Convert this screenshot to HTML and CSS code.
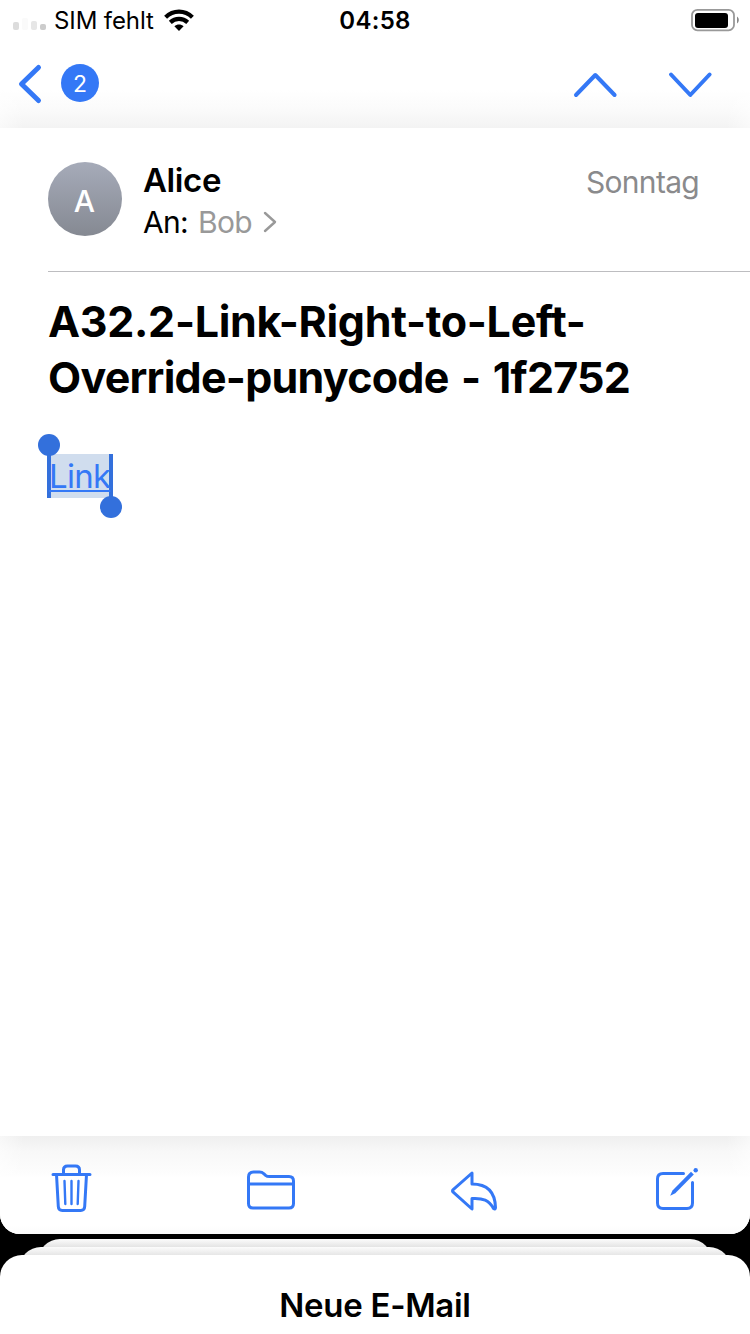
FILE: index.html
```html
<!DOCTYPE html>
<html lang="de">
<head>
<meta charset="utf-8">
<title>Mail</title>
<link rel="stylesheet" href="styles.css">
</head>
<body>
<main class="screen">
  <section class="mail">
    <header class="top">
      <div class="status">
        <div class="carrier">
          <span class="signal"><i class="bar b1"></i><i class="bar b2"></i><i class="bar b3"></i><i class="bar b4"></i></span>
          <span class="carrier-name">SIM fehlt</span>
          <svg class="wifi" width="30" height="22" viewBox="0 0 30 22" fill="none" stroke="#000" stroke-width="4.2">
            <path d="M1.600 8.200C9.200.8 20.800.8 28.400 8.200"/>
            <path d="M6.300 13.400c4.900-4.600 12.500-4.600 17.400 0"/>
            <path d="M15 21.900l-4.600-4.600c2.600-2.300 6.600-2.300 9.200 0z" fill="#000" stroke="none"/>
          </svg>
        </div>
        <time class="clock">04:58</time>
        <svg class="battery" width="49" height="24" viewBox="0 0 49 24">
          <rect x="2" y="1.900" width="42" height="20.400" rx="5.400" fill="none" stroke="#999" stroke-width="1.800"/>
          <rect x="5" y="5" width="33" height="15" rx="3" fill="#000"/>
          <path d="M47 8.500c2.400 1.500 2.400 5.500 0 7z" fill="#888"/>
        </svg>
      </div>
      <nav class="nav">
        <svg class="back" width="26" height="42" viewBox="0 0 26 42"><path d="M21.500 4.500L4.500 21l17 16.500"/></svg>
        <span class="count">2</span>
        <svg class="prev" width="46" height="28" viewBox="0 0 46 28"><path d="M4 25L23.300 5 42.600 25"/></svg>
        <svg class="next" width="46" height="28" viewBox="0 0 46 28"><path d="M4 4.500L23.300 25 42.600 4.500"/></svg>
      </nav>
    </header>
    <article class="message">
      <header class="sender">
        <div class="avatar">A</div>
        <div class="people">
          <div class="from">Alice</div>
          <div class="to"><span class="to-label">An:</span><span class="to-name">Bob</span>
            <svg class="more" width="14" height="22" viewBox="0 0 14 22"><path d="M2 2l10 9-10 9"/></svg>
          </div>
        </div>
        <time class="date">Sonntag</time>
      </header>
      <h1 class="subject"><span class="line-one">A32.2-Link-Right-to-Left-</span><br><span class="line-two">Override-punycode - 1f2752</span></h1>
      <div class="selection"><a class="link">Link</a><i class="knob start"></i><i class="knob end"></i></div>
    </article>
    <footer class="toolbar">
      <svg class="tool trash" width="42" height="50" viewBox="0 0 42 50">
        <path d="M2 10.500h37M12.500 10.500V6q0-4 4-4h8q4 0 4 4v4.500M5.500 10.500l1.800 32q.2 4 4 4h18.400q3.800 0 4-4L35.500 10.500"/>
        <path class="thin" d="M13.500 17l.8 23M20.500 17v23M27.500 17l-.8 23"/>
      </svg>
      <svg class="tool folder" width="50" height="42" viewBox="0 0 50 42">
        <path d="M2.500 33.500V7q0-5 5-5h6q2.500 0 4.500 1.800l1.600 1.500Q21 6.500 23.500 6.500H43q4.500 0 4.500 4.500v22.500q0 4.500-4.500 4.500H7q-4.500 0-4.500-4.500zM2.500 14h45"/>
      </svg>
      <svg class="tool reply" width="48" height="42" viewBox="0 0 48 42">
        <path d="M22 2L3.200 18.700q-1.400 1.200 0 2.500L22 38V27.500c11-.6 17 1.500 21.500 10q2 1.200 2-1C45 20 36 13 22 13z"/>
      </svg>
      <svg class="tool compose" width="44" height="44" viewBox="0 0 44 44">
        <path d="M28.500 6.500H8Q2.500 6.500 2.500 12v24Q2.500 41.500 8 41.500h24q5.500 0 5.500-5.500V15.500"/>
        <path d="M15.200 28.700l2.300-5.300L36 4.800l2.800 2.800-18.500 18.600z" fill="#3478f6" stroke="none"/>
        <circle cx="40.700" cy="3.200" r="2.200" fill="#3478f6" stroke="none"/>
      </svg>
    </footer>
  </section>
  <section class="stack">
    <div class="sheet far"></div>
    <div class="sheet mid"></div>
    <div class="sheet near">Neue E-Mail</div>
  </section>
</main>
</body>
</html>
```
FILE: styles.css
```css
body { margin: 0; background: #000; font-family: Inter, "Liberation Sans", sans-serif; color: #000; }
.screen { width: 750px; height: 1334px; overflow: hidden; display: flex; flex-direction: column; background: #000; }
.mail { height: 1234px; display: flex; flex-direction: column; background: #fff; border-radius: 0 0 20px 20px; overflow: hidden; }
.top { height: 128px; background: linear-gradient(90deg, #fff8, #fff0 24px, #fff0 726px, #fff8), linear-gradient(#fff 90px, #fbfbfb 108px, #f3f3f3 128px); }
.status { height: 40px; display: grid; grid-template-columns: 1fr auto 1fr; align-items: center; }
.carrier { display: flex; align-items: center; padding-left: 13px; }
.signal { display: flex; align-items: flex-end; gap: 3px; width: 41px; height: 12px; padding-top: 8px; }
.bar { width: 6px; border-radius: 2px; background: #dcdcdc; }
.b1 { height: 8px; }
.b2 { height: 12px; background: #fafafa; }
.b3 { height: 9px; background: #e6e6e6; }
.b4 { height: 6px; background: #ccc; }
.carrier-name { width: 100px; padding-top: 2px; font-size: 24px; white-space: nowrap; line-height: 38px; letter-spacing: -.1px; }
.wifi { margin-left: 10px; }
.clock { padding-top: 1px; font-size: 24px; font-weight: 600; letter-spacing: .3px; }
.battery { justify-self: end; margin-right: 11px; }
.nav { height: 88px; display: flex; align-items: center; padding-left: 17px; }
.nav svg { fill: none; stroke: #3478f6; stroke-width: 4; stroke-linecap: round; stroke-linejoin: round; }
.nav .back { stroke-width: 5; }
.count { width: 38px; height: 38px; margin: -2px 0 0 18px; border-radius: 50%; background: #3478f6; color: #fff; font-size: 23px; line-height: 40px; text-align: center; }
.prev { margin-left: auto; }
.next { margin: 0 37px 0 49px; }
.message { height: 1008px; padding-left: 48px; box-sizing: border-box; }
.sender { height: 144px; box-sizing: border-box; border-bottom: 1px solid #bdbdc0; display: flex; align-items: flex-start; padding-top: 34px; }
.avatar { width: 74px; height: 74px; border-radius: 50%; background: linear-gradient(#a6abb9, #858992); color: #fff; font-size: 30px; font-weight: 500; line-height: 78px; text-align: center; text-indent: -1px; }
.people { margin-left: 21px; }
.from { font-size: 33px; font-weight: 600; line-height: 36px; letter-spacing: -.4px; }
.to { display: flex; align-items: center; font-size: 30px; line-height: 48px; letter-spacing: -.7px; }
.to-name { margin: 0 11px 0 10px; color: #999; }
.more { fill: none; stroke: #999; stroke-width: 2.400; stroke-linecap: round; stroke-linejoin: round; }
.date { margin: 0 51px 0 auto; color: #8a8a8c; font-size: 30px; line-height: 40px; letter-spacing: -.7px; }
.subject { margin: 21px 0 0; font-size: 43px; line-height: 56px; font-weight: 700; white-space: nowrap; }
.line-one { letter-spacing: -.3px; }
.line-two { letter-spacing: -.750px; word-spacing: 3px; }
.selection { position: relative; width: 58px; height: 44px; margin: 49px 0 0 -1px; border: solid #3370dc; border-width: 0 4px; background: #d0ddee; }
.link { display: block; margin-left: -2px; color: #3478f6; font-size: 33px; line-height: 45px; letter-spacing: -.7px; text-decoration: underline; text-decoration-thickness: 2px; text-underline-offset: 2px; text-decoration-skip-ink: none; white-space: nowrap; }
.knob { position: absolute; width: 22px; height: 22px; border-radius: 50%; background: #3370dc; }
.start { left: -13px; top: -20px; }
.end { right: -13px; bottom: -20px; }
.toolbar { height: 98px; box-sizing: border-box; display: flex; align-items: flex-start; padding: 28px 0 0 51px; background: linear-gradient(90deg, #fff8, #fff0 24px, #fff0 726px, #fff8), linear-gradient(#efefef, #f8f8f8 16px, #fcfcfc 34px, #fff 42px, #fff 90px, #fbfbfb); }
.tool { fill: none; stroke: #3478f6; stroke-width: 3; stroke-linecap: round; stroke-linejoin: round; }
.thin { stroke-width: 2.400; }
.folder { margin: 6px 0 0 153px; }
.reply { margin: 7px 0 0 154px; }
.compose { margin: 3px 0 0 157px; }
.stack { display: flex; flex-direction: column; align-items: center; padding-top: 5px; }
.sheet { border-radius: 22px 22px 0 0; }
.far { width: 674px; height: 30px; background: linear-gradient(#fcfcfc, #e4e4e4 8px); }
.mid { width: 712px; height: 30px; margin-top: -22px; background: linear-gradient(#fcfcfc, #e6e6e6 8px); }
.near { width: 750px; height: 79px; margin-top: -22px; background: #fff; font-size: 33px; font-weight: 600; line-height: 101px; letter-spacing: -.3px; text-align: center; }
```
